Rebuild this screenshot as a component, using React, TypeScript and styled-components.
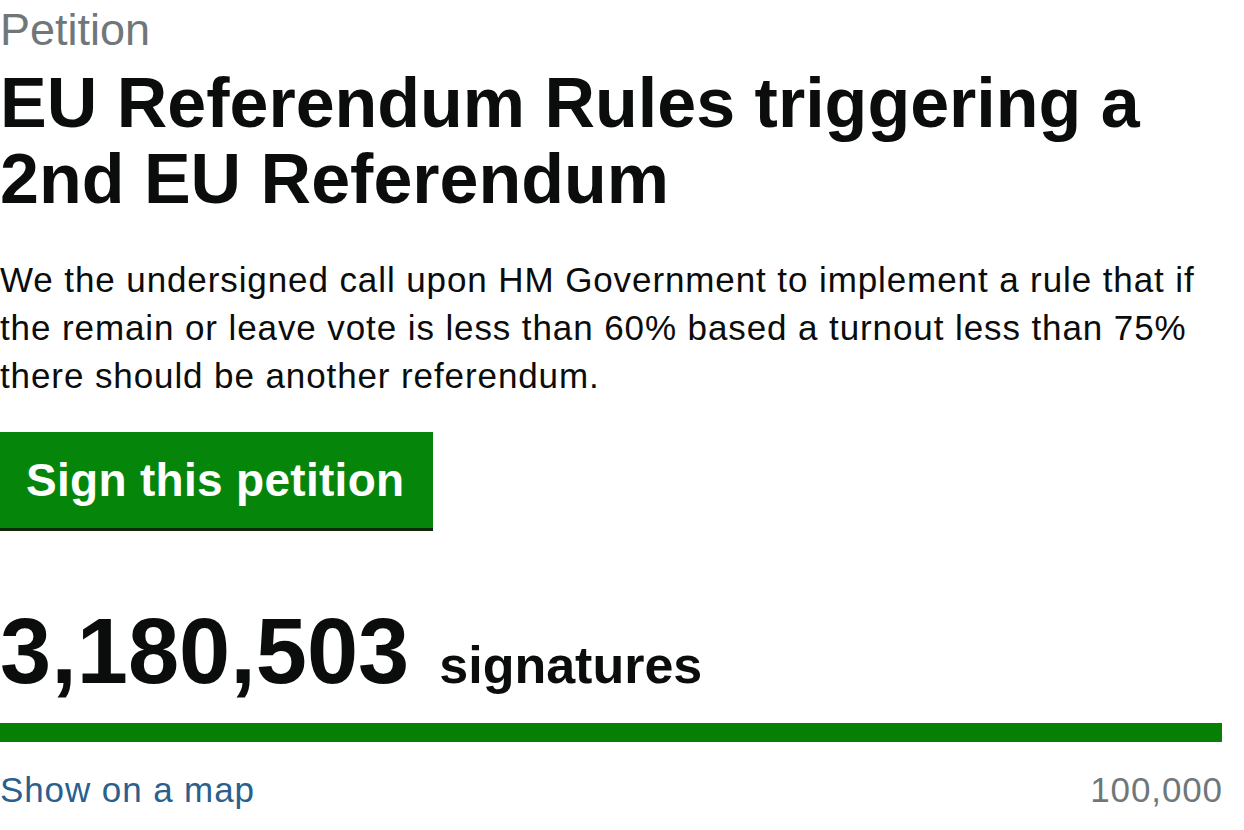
import styled, { createGlobalStyle } from 'styled-components'

const GlobalStyle = createGlobalStyle`
  html, body {
    margin: 0;
    padding: 0;
    background: #ffffff;
  }
  body {
    font-family: 'Liberation Sans', Arial, sans-serif;
    color: #0b0c0c;
    -webkit-font-smoothing: antialiased;
  }
`

const Page = styled.main`
  width: 1222px;
  padding: 0 22px 0 0;
  display: flex;
  flex-direction: column;
`

const Kicker = styled.div`
  margin-top: 5px;
  font-size: 45px;
  line-height: 50px;
  color: #6f777b;
`

const Title = styled.h1`
  margin: 10px 0 0;
  font-size: 70px;
  line-height: 76px;
  font-weight: 700;
  color: #0b0c0c;
`

const Action = styled.p`
  margin: 39px 0 0;
  font-size: 35px;
  line-height: 48px;
  letter-spacing: 0.9px;
  color: #0b0c0c;
  max-width: 1200px;
`

const SignButton = styled.button`
  align-self: flex-start;
  margin-top: 32px;
  height: 96px;
  padding: 0 29px 0 26px;
  border: 0;
  background: #05860b;
  box-shadow: 0 3px 0 #0a2a0a;
  color: #ffffff;
  font-family: 'Liberation Sans', Arial, sans-serif;
  font-size: 46px;
  font-weight: 700;
  line-height: 96px;
  letter-spacing: 0.3px;
  cursor: pointer;
`

const CountRow = styled.div`
  margin-top: 78px;
  display: flex;
  align-items: baseline;
  gap: 30px;
`

const Count = styled.span`
  font-size: 92px;
  line-height: 91px;
  font-weight: 700;
  color: #0b0c0c;
`

const CountLabel = styled.span`
  font-size: 52px;
  font-weight: 700;
  color: #0b0c0c;
`

const Track = styled.div`
  margin-top: 26px;
  height: 19px;
  background: #e6e6e6;
`

const Fill = styled.div`
  height: 100%;
  background: #058005;
`

const Footer = styled.div`
  margin-top: 24px;
  display: flex;
  justify-content: space-between;
  font-size: 35px;
  line-height: 48px;
  letter-spacing: 0.9px;
`

const MapLink = styled.a`
  color: #2a5f8e;
  text-decoration: none;
`

const Target = styled.span`
  color: #6f777b;
  margin-right: -1px;
`

const signatures = 3180503
const target = 100000

export default function App() {
  const progress = Math.min(100, (signatures / target) * 100)
  return (
    <>
      <GlobalStyle />
      <Page>
        <Kicker>Petition</Kicker>
        <Title>
          EU Referendum Rules triggering a
          <br />
          2nd EU Referendum
        </Title>
        <Action>
          We the undersigned call upon HM Government to implement a rule that if the remain or leave vote is less
          than 60% based a turnout less than 75% there should be another referendum.
        </Action>
        <SignButton>Sign this petition</SignButton>
        <CountRow>
          <Count>{signatures.toLocaleString('en-GB')}</Count>
          <CountLabel>signatures</CountLabel>
        </CountRow>
        <Track>
          <Fill style={{ width: `${progress}%` }} />
        </Track>
        <Footer>
          <MapLink href="#">Show on a map</MapLink>
          <Target>{target.toLocaleString('en-GB')}</Target>
        </Footer>
      </Page>
    </>
  )
}
